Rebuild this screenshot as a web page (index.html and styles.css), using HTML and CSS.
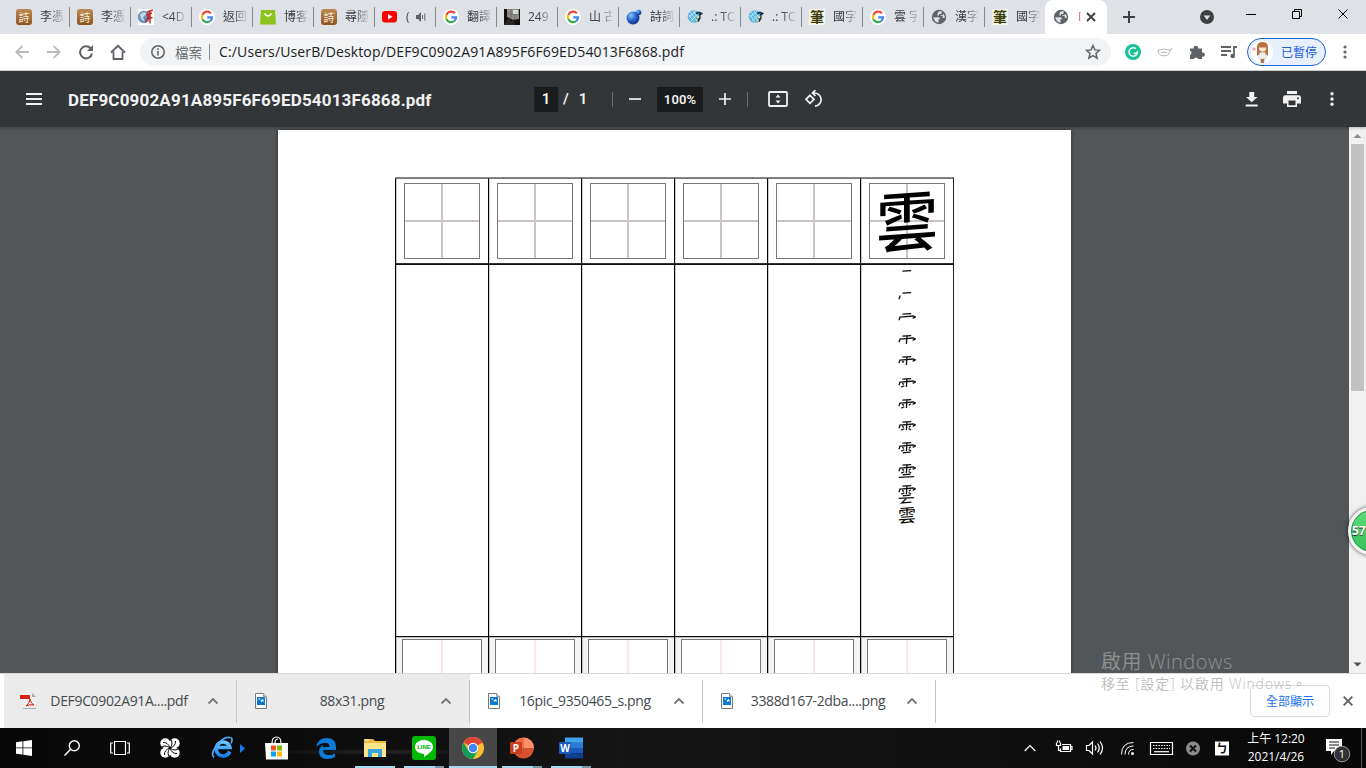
FILE: index.html
```html
<!DOCTYPE html>
<html lang="zh-Hant">
<head>
<meta charset="utf-8">
<title>DEF9C0902A91A895F6F69ED54013F6868.pdf</title>
<link rel="stylesheet" href="styles.css">
</head>
<body>
<svg class="defs" width="0" height="0">
  <defs>
    <linearGradient id="brown" x1="0" y1="0" x2="0" y2="1"><stop offset="0" stop-color="#c08a52"/><stop offset="1" stop-color="#8a5420"/></linearGradient>
    <radialGradient id="ball" cx=".35" cy=".3" r=".8"><stop offset="0" stop-color="#8cc4ff"/><stop offset=".5" stop-color="#2463c8"/><stop offset="1" stop-color="#0a2a7a"/></radialGradient>
    <linearGradient id="ie" x1="0" y1="0" x2="0" y2="1"><stop offset="0" stop-color="#6cc6ff"/><stop offset="1" stop-color="#1482f0"/></linearGradient>
    <symbol id="f-poem" viewBox="0 0 16 16"><rect width="16" height="16" rx="3" fill="url(#brown)"/><text x="8" y="12.500" class="poem" text-anchor="middle">詩</text></symbol>
    <symbol id="f-hua" viewBox="0 0 16 16"><rect width="16" height="16" fill="#fff"/><circle cx="6" cy="8" r="6.200" fill="#5f93bd"/><path d="M2 5l4-2 3 2-4 3 2 5-4-3z" fill="#c5d8e6"/><path d="M9 3l6-2M8 6l6-2M12 1.500v13M7 13q4-4 4-9M8.500 10l6-1.500" stroke="#c22" stroke-width="1.400" fill="none"/></symbol>
    <symbol id="f-google" viewBox="0 0 16 16"><circle cx="8" cy="8" r="8" fill="#fff"/><g fill="none" stroke-width="2.200"><path d="M11.900 4.300A5.100 5.100 0 0 0 3.400 5.800" stroke="#ea4335"/><path d="M3.400 5.800A5.100 5.100 0 0 0 3.400 10.300" stroke="#fbbc05"/><path d="M3.400 10.300A5.100 5.100 0 0 0 11.300 12" stroke="#34a853"/><path d="M11.300 12A5.100 5.100 0 0 0 13.100 8.300H8.200" stroke="#4285f4"/></g></symbol>
    <symbol id="f-bag" viewBox="0 0 16 16"><path d="M1 1h14l1 14.500H0z" fill="#8cc21e"/><path d="M4.500 4.500q3.500 5 7 0" fill="none" stroke="#fff" stroke-width="1.500"/></symbol>
    <symbol id="f-tube" viewBox="0 0 16 16"><rect y="2" width="15" height="11.500" rx="3" fill="#f00"/><path d="M6 5l4.500 2.800L6 10.500z" fill="#fff"/></symbol>
    <symbol id="f-photo" viewBox="0 0 16 16"><rect width="16" height="16" fill="#120f0d"/><path d="M3 0h12v10l-6 1-6-3z" fill="#8c8c88"/><path d="M7 0v10M11 0v10M3 5h12" stroke="#6d6a64" stroke-width=".8"/><path d="M9 1h5v4H9z" fill="#d5d5d2"/><path d="M0 16L5 8l2 4 3-2 1 6z" fill="#2d2621"/></symbol>
    <symbol id="f-ball" viewBox="0 0 16 16"><circle cx="7" cy="9" r="6.500" fill="url(#ball)"/><circle cx="12.500" cy="3.500" r="2.800" fill="url(#ball)"/></symbol>
    <symbol id="f-toc" viewBox="0 0 16 16"><circle cx="7" cy="7.500" r="6.300" fill="#5ab4de"/><path d="M3 3l7 9M2 8l7-6M4 12l6-6M2 6l5 7M6 2l5 7" stroke="#c9efff" stroke-width=".8"/><path d="M9 4.500l3-1 2.500 1-2 1.500.3 3-2 3.500" fill="none" stroke="#172b48" stroke-width="1.700"/><path d="M11.500 6.500v2.500M9 12l1.500-1" stroke="#ffe23a" stroke-width="1.500"/></symbol>
    <symbol id="f-globe" viewBox="0 0 16 16"><circle cx="8" cy="8" r="7.200" fill="#5f6368"/><path d="M2.200 8.200h5q1.800 0 1.800 2H7.500v3.500Q3.500 13.200 2.200 8.200zM8.500 2.300h2.200v1.500q0 1.200-1.300 1.200H8v1.600H6.500V5q0-2 2-2.700zM9.500 7h2.200v2h2.100q.3-2.500-1.500-4.200l-.8 1.500h-2z" fill="#dee1e6"/></symbol>
    <symbol id="chev" viewBox="0 0 12 8"><path d="M1.500 6.500L6 2l4.500 4.500" fill="none" stroke="#757575" stroke-width="1.800"/></symbol>
    <symbol id="png" viewBox="0 0 12 16"><path d="M.5.500h8l3 3v12H.5z" fill="#fff" stroke="#777"/><path d="M8.500.500v3h3" fill="#ddd" stroke="#999"/><rect x="2" y="4" width="8" height="8" fill="#0a78d0"/><path d="M3 5.500h2.500L4.500 7zM5.500 7.500L8 6l1 3-1.500-1-1 1z" fill="#fff"/></symbol>
    <g id="k1"><path d="M14.700 4L44 2"/></g>
    <g id="k2"><use href="#k1"/><path d="M7.300 12L3 24"/></g>
    <g id="k3"><use href="#k2"/><path d="M7.300 14L51 10L58 13L49 18"/></g>
    <g id="k4"><use href="#k3"/><path d="M29.700 3L28 30"/></g>
    <g id="k5"><use href="#k4"/><path d="M13.700 18L20 21.500"/></g>
    <g id="k6"><use href="#k5"/><path d="M10.500 30.700L21 26"/></g>
    <g id="k7"><use href="#k6"/><path d="M43 16L36 21"/></g>
    <g id="k8"><use href="#k7"/><path d="M35 25L44 30"/></g>
    <g id="k9"><use href="#k8"/><path d="M15.700 36L42 34"/></g>
    <g id="k10"><use href="#k9"/><path d="M2 45L54 42"/></g>
    <g id="k11"><use href="#k10"/><path d="M28 45L12 60L45 57"/></g>
  </defs>
</svg>

<header class="tabs">
  <div class="tab"><svg class="fav"><use href="#f-poem"/></svg><span class="tt">李憑</span></div>
  <div class="tab"><svg class="fav"><use href="#f-poem"/></svg><span class="tt">李憑</span></div>
  <div class="tab"><svg class="fav"><use href="#f-hua"/></svg><span class="tt">&lt;4D</span></div>
  <div class="tab"><svg class="fav"><use href="#f-google"/></svg><span class="tt">返回</span></div>
  <div class="tab"><svg class="fav"><use href="#f-bag"/></svg><span class="tt">博客</span></div>
  <div class="tab"><svg class="fav"><use href="#f-poem"/></svg><span class="tt">尋隱</span></div>
  <div class="tab"><svg class="fav"><use href="#f-tube"/></svg><span class="tt tiny">(</span><svg class="snd" viewBox="0 0 10 10"><path d="M0 3h2l3-3v10L2 7H0z" fill="#5f6368"/><path d="M6.500 3v4M8.800 1.500v7" stroke="#5f6368" fill="none"/></svg></div>
  <div class="tab"><svg class="fav"><use href="#f-google"/></svg><span class="tt">翻譯</span></div>
  <div class="tab"><svg class="fav"><use href="#f-photo"/></svg><span class="tt">249</span></div>
  <div class="tab"><svg class="fav"><use href="#f-google"/></svg><span class="tt">山 古</span></div>
  <div class="tab"><svg class="fav"><use href="#f-ball"/></svg><span class="tt">詩詞</span></div>
  <div class="tab"><svg class="fav"><use href="#f-toc"/></svg><span class="tt">.: TO</span></div>
  <div class="tab"><svg class="fav"><use href="#f-toc"/></svg><span class="tt">.: TO</span></div>
  <div class="tab"><span class="fav brush">筆</span><span class="tt">國字</span></div>
  <div class="tab"><svg class="fav"><use href="#f-google"/></svg><span class="tt">雲 字</span></div>
  <div class="tab"><svg class="fav"><use href="#f-globe"/></svg><span class="tt">漢字</span></div>
  <div class="tab last"><span class="fav brush">筆</span><span class="tt">國字</span></div>
  <div class="tab active"><svg class="fav"><use href="#f-globe"/></svg><span class="tt tiny">D</span><svg class="x" viewBox="0 0 10 10"><path d="M1 1l8 8M9 1l-8 8" stroke="#3c4043" stroke-width="1.900"/></svg></div>
  <svg class="plus" viewBox="0 0 12 12"><path d="M6 0v12M0 6h12" stroke="#3c4043" stroke-width="2"/></svg>
  <svg class="drop" viewBox="0 0 14 14"><circle cx="7" cy="7" r="7" fill="#3c4043"/><path d="M3.700 5.500h6.600L7 10z" fill="#dee1e6"/></svg>
  <svg class="win" viewBox="0 0 104 12"><path d="M0 7.500h10M46.500 4.500h7v7h-7zM48.500 4V2.500h7v7H54M92.500 2.500l9 9M101.500 2.500l-9 9" fill="none" stroke="#000"/></svg>
</header>

<nav class="bar">
  <svg class="navs" viewBox="0 0 112 16"><g fill="none" stroke-width="1.800"><path d="M14 8H1.500M7.500 1.800L1.300 8l6.200 6.200M32 8h12.500M38.500 1.800L44.700 8l-6.200 6.200" stroke="#b8babd"/><path d="M75.700 4.500A6 6 0 1 0 77 9.500" stroke="#5f6368" stroke-width="2"/><path d="M96 8.500l7-6.700 7 6.700M98.500 7.500V15h9V7.500" stroke="#5f6368"/></g><path d="M78 1v6h-6z" fill="#5f6368"/></svg>
  <div class="omni">
    <svg class="info" viewBox="0 0 14 14"><circle cx="7" cy="7" r="6.200" fill="none" stroke="#5f6368" stroke-width="1.500"/><path d="M7 6v4.500M7 3.300v1.600" stroke="#5f6368" stroke-width="1.600"/></svg>
    <span class="scheme">檔案</span><i class="vr"></i><span class="url">C:/Users/UserB/Desktop/DEF9C0902A91A895F6F69ED54013F6868.pdf</span>
    <svg class="star" viewBox="0 0 16 16"><path d="M8 1.500l1.900 4.400 4.700.4-3.600 3.100 1.100 4.700L8 11.600l-4.100 2.500L5 9.400 1.400 6.300l4.700-.4z" fill="none" stroke="#5f6368" stroke-width="1.500"/></svg>
  </div>
  <svg class="gram" viewBox="0 0 16 16"><circle cx="8" cy="8" r="8" fill="#15c39a"/><path d="M10.800 4.700a4.200 4.200 0 1 0 1.400 4.500H8.800M12.200 7v3" fill="none" stroke="#fff" stroke-width="1.500"/></svg>
  <svg class="mask" viewBox="0 0 16 10"><path d="M1 3q5.500-2 12 0 0 5-4 5.500-2.500.5-5 0Q1 7 1 3z" fill="#fafafa" stroke="#aaa" stroke-width=".8"/><path d="M4 5l1 .8 1-.8 1 .8 1-.8 1 .8 1-.8M13 3q2 0 2-2" fill="none" stroke="#aaa" stroke-width=".8"/></svg>
  <svg class="puz" viewBox="0 0 16 16"><path d="M1 4.500h3.700a2.200 2.200 0 1 1 4.300 0h4v4a2.200 2.200 0 1 1 0 4.200V15H9.200a2.200 2.200 0 0 0-4.200 0H1v-4a2.200 2.200 0 0 0 0-4.200z" fill="#5f6368"/></svg>
  <svg class="que" viewBox="0 0 16 14"><path d="M0 2h10M0 6h10M0 10h6M13 11V2h3" fill="none" stroke="#5f6368" stroke-width="1.800"/><circle cx="11.700" cy="11" r="2.300" fill="#5f6368"/></svg>
  <div class="prof"><svg class="face" viewBox="0 0 22 22"><circle cx="11" cy="11" r="11" fill="#fff"/><path d="M6 15V6q0-5 5.500-5T17 6v9l-3-2h-5z" fill="#b87145"/><path d="M8 6.500h7V9q-3 3.500-7 0z" fill="#ffe4d0"/><path d="M9 11.500h5l1.500 6h-8z" fill="#eee" stroke="#ccc" stroke-width=".5"/><path d="M9.500 18h4l-.5 4h-3z" fill="#a87955"/><circle cx="3" cy="8" r="1.800" fill="#f7a6be"/></svg><span>已暫停</span></div>
  <svg class="dots" viewBox="0 0 4 14"><g fill="#5f6368"><circle cx="2" cy="2" r="1.600"/><circle cx="2" cy="7" r="1.600"/><circle cx="2" cy="12" r="1.600"/></g></svg>
</nav>

<div class="pdfbar">
  <svg class="menu" viewBox="0 0 16 12"><path d="M0 1h16M0 6h16M0 11h16" stroke="#f1f1f1" stroke-width="2"/></svg>
  <b class="fname">DEF9C0902A91A895F6F69ED54013F6868.pdf</b>
  <div class="pg"><span class="box one">1</span><span class="sl">/</span><span>1</span></div>
  <i class="sep s1"></i>
  <svg class="minus" viewBox="0 0 12 12"><path d="M0 6h12" stroke="#f1f1f1" stroke-width="1.700"/></svg>
  <span class="box pct">100%</span>
  <svg class="add" viewBox="0 0 12 12"><path d="M0 6h12M6 0v12" stroke="#f1f1f1" stroke-width="1.700"/></svg>
  <i class="sep s2"></i>
  <svg class="fit" viewBox="0 0 20 16"><rect x="1" y="1" width="18" height="14" rx="1" fill="none" stroke="#f1f1f1" stroke-width="1.800"/><path d="M7.500 6.500L10 3.500l2.500 3zM7.500 9.500l2.500 3 2.500-3z" fill="#f1f1f1"/></svg>
  <svg class="rot" viewBox="0 0 18 18"><path d="M5 5.300L9 9.300l-4 4-4-4zM10 16.200A6.600 6.600 0 1 0 9 3H7M10.500 0L7.500 3l3 3" fill="none" stroke="#f1f1f1" stroke-width="1.700"/></svg>
  <div class="acts">
    <svg width="14" height="16" viewBox="0 0 14 16"><path d="M4.300 1h4.900v5H12.500L6.700 11.300 1 6h3.300zM.7 13.500h12v2H.7z" fill="#f1f1f1"/></svg>
    <svg width="18" height="16" viewBox="0 0 18 16"><path d="M4 0h10v3H4zM2.500 4.300h13Q18 4.300 18 7v5.500h-4V16H4v-3.500H0V7q0-2.700 2.500-2.700zM5.500 9.500v4.800h7V9.500z" fill="#f1f1f1" fill-rule="evenodd"/><circle cx="15" cy="7.200" r="1" fill="#323639"/></svg>
    <svg width="4" height="16" viewBox="0 0 4 16"><g fill="#f1f1f1"><circle cx="2" cy="2.700" r="1.700"/><circle cx="2" cy="8" r="1.700"/><circle cx="2" cy="13.300" r="1.700"/></g></svg>
  </div>
</div>

<main class="view">
  <div class="paper">
    <div class="grid">
      <div class="c head"><i class="sq"></i></div><div class="c head"><i class="sq"></i></div><div class="c head"><i class="sq"></i></div><div class="c head"><i class="sq"></i></div><div class="c head"><i class="sq"></i></div><div class="c head"><i class="sq"><span class="big">雲</span></i></div>
      <div class="c"></div><div class="c"></div><div class="c"></div><div class="c"></div><div class="c"></div>
      <div class="c steps">
        <svg viewBox="0 0 60 72"><use href="#k1"/></svg><svg viewBox="0 0 60 72"><use href="#k2"/></svg><svg viewBox="0 0 60 72"><use href="#k3"/></svg><svg viewBox="0 0 60 72"><use href="#k4"/></svg><svg viewBox="0 0 60 72"><use href="#k5"/></svg><svg viewBox="0 0 60 72"><use href="#k6"/></svg><svg viewBox="0 0 60 72"><use href="#k7"/></svg><svg viewBox="0 0 60 72"><use href="#k8"/></svg><svg viewBox="0 0 60 72"><use href="#k9"/></svg><svg viewBox="0 0 60 72"><use href="#k10"/></svg><svg viewBox="0 0 60 72"><use href="#k11"/></svg><span class="small">雲</span>
      </div>
      <div class="c foot"><i class="sq"></i></div><div class="c foot"><i class="sq"></i></div><div class="c foot"><i class="sq"></i></div><div class="c foot"><i class="sq"></i></div><div class="c foot"><i class="sq"></i></div><div class="c foot"><i class="sq"></i></div>
    </div>
  </div>
  <div class="scroll"><svg viewBox="0 0 17 17"><path d="M4.500 11L8.500 7l4 4z" fill="#8a8a8a"/></svg><i class="thumb"></i><svg viewBox="0 0 17 17"><path d="M4.500 6.500L8.500 10.500l4-4z" fill="#505050"/></svg></div>
  <div class="badge">57</div>
</main>

<section class="shelf">
  <div class="dl gray"><svg class="di" viewBox="0 0 16 16"><path d="M3 0h9l4 4v12H3z" fill="#eee"/><path d="M12 0v4h4z" fill="#aaa"/><path d="M3 15.500h13" stroke="#aaa"/><path d="M0 2h10v4H0z" fill="#d9230f"/><path d="M6 13q4-3 4-7 1 5 4 6-4-1-8 1z" fill="none" stroke="#d9230f"/></svg><span class="n1">DEF9C0902A91A....pdf</span><svg class="cv"><use href="#chev"/></svg></div>
  <div class="dl gray"><svg class="di"><use href="#png"/></svg><span class="n2">88x31.png</span><svg class="cv"><use href="#chev"/></svg></div>
  <div class="dl"><svg class="di"><use href="#png"/></svg><span class="n3">16pic_9350465_s.png</span><svg class="cv"><use href="#chev"/></svg></div>
  <div class="dl"><svg class="di"><use href="#png"/></svg><span class="n4">3388d167-2dba....png</span><svg class="cv"><use href="#chev"/></svg></div>
  <button class="all">全部顯示</button>
  <svg class="close" viewBox="0 0 10 10"><path d="M.7.700l8.600 8.600M9.300.700L.7 9.300" stroke="#5f6368" stroke-width="1.900"/></svg>
</section>
<div class="mark"><div class="m1">啟用 Windows</div><div class="m2">移至 [設定] 以啟用 Windows。</div></div>

<footer class="task">
  <div class="ti"><svg width="16" height="16" viewBox="0 0 16 16"><path d="M0 2.200L6.500 1.300v6.200H0zM7.300 1.200L16 0v7.500H7.300zM0 8.300h6.500v6.300L0 13.700zM7.300 8.300H16V16l-8.700-1.200z" fill="#fff"/></svg></div>
  <div class="ti"><svg width="16" height="16" viewBox="0 0 16 16"><circle cx="10.300" cy="5.700" r="5" fill="none" stroke="#fff" stroke-width="1.400"/><path d="M6.700 9.300L.5 15.500" stroke="#fff" stroke-width="1.500"/></svg></div>
  <div class="ti"><svg width="20" height="16" viewBox="0 0 20 16"><path d="M4.500 1.500h11v13h-11zM3 3H.7v10H3M17 3h2.300v10H17" fill="none" stroke="#fff" stroke-width="1.200"/></svg></div>
  <div class="ti"><svg width="20" height="20" viewBox="0 0 20 20"><g fill="#fff"><circle cx="5.300" cy="5.300" r="5"/><circle cx="14.700" cy="5.300" r="5"/><circle cx="14.700" cy="14.700" r="5"/><circle cx="5.300" cy="14.700" r="5"/><path d="M6 6h8v8H6z"/></g><path d="M10 10Q8 4 3 4.500M10 10q6-2 5.500-7M10 10q2 6 7 5.500M10 10q-6 2-5.500 7M10 10Q14 5 10 0M10 10q5 4 10 0M10 10q-4 5 0 10M10 10Q5 6 0 10" fill="none" stroke="#080808" stroke-width="1"/></svg></div>
  <div class="ti ieb"><svg width="34" height="24" viewBox="0 0 34 24"><path d="M18.700 15.500A7 7 0 1 1 19 11.500H7" fill="none" stroke="url(#ie)" stroke-width="3.600"/><path d="M3 21.500Q-1 18 6 9T19 1.500q3.500.5 1 6" fill="none" stroke="#49aaf7" stroke-width="1.700"/><path d="M29 8l5 4.500-5 4.500z" fill="#1877f2"/></svg></div>
  <div class="ti"><svg width="24" height="24" viewBox="0 0 24 24"><path d="M0 7h23v16.500H1z" fill="#fff"/><path d="M7 7q0-6 4.500-6T16 7M10 7q0-4 3-4" fill="none" stroke="#fff" stroke-width="1.200"/><path d="M6 9.500h5v5H6z" fill="#f25022"/><path d="M12 9.500h5v5h-5z" fill="#7fba00"/><path d="M6 15.500h5v5H6z" fill="#00a4ef"/><path d="M12 15.500h5v5h-5z" fill="#ffb900"/></svg></div>
  <div class="ti"><svg width="20" height="21" viewBox="0 0 20 21"><path d="M0 9Q2 0 10.500 0 20 0 20 9v3H7q0 5 6 5 3 0 6-1.500V19q-3 2-8 2-8 0-8-8 0-4 5-6.500Q6 8 6.500 9h7q0-4-4-4Q4 5 0 9z" fill="#0a7bd8"/></svg></div>
  <div class="ti on"><svg width="22" height="20" viewBox="0 0 22 20"><path d="M0 1h9l2 2h11v16H0z" fill="#e9b83c"/><path d="M0 5h22v14H0z" fill="#ffe28a"/><path d="M1 2h4" stroke="#fff"/><path d="M4 19v-8h14v8h-4v-4H8v4z" fill="#35a5e0"/></svg></div>
  <div class="ti on dbl"><svg width="24" height="24" viewBox="0 0 24 24"><rect width="24" height="24" rx="3" fill="#00b900"/><path d="M12 4c5 0 9 3 9 7 0 3-3 6-9 10v-3.200c-5 0-9-2.800-9-6.800s4-7 9-7z" fill="#fff"/><text x="12" y="13.200" class="ln" text-anchor="middle">LINE</text></svg></div>
  <div class="ti on hot"><svg width="22" height="22" viewBox="0 0 22 22"><circle cx="11" cy="11" r="11" fill="#fbc02d"/><path d="M11 11L1.500 5.500A11 11 0 0 1 20.500 5.500z" fill="#db4437"/><path d="M1.500 5.500A11 11 0 0 0 11 22l4.700-8.300L11 11 6 13z" fill="#0f9d58"/><path d="M11 6h9.800L20 4H10z" fill="#db4437"/><circle cx="11" cy="11" r="5.200" fill="#fff"/><circle cx="11" cy="11" r="4.200" fill="#4285f4"/></svg></div>
  <div class="ti on dbl"><svg width="24" height="22" viewBox="0 0 24 22"><circle cx="13.500" cy="11" r="10.500" fill="#d35230"/><path d="M13.500.500v10.500h10.500A10.500 10.500 0 0 0 13.500.500z" fill="#ff8f6b"/><path d="M13.500.500A10.500 10.500 0 0 0 3 11h10.500z" fill="#ed6c47"/><rect y="5" width="12" height="12" rx="1" fill="#c43e1c"/><text x="6" y="14.500" class="of" text-anchor="middle">P</text></svg></div>
  <div class="ti on dbl"><svg width="24" height="22" viewBox="0 0 24 22"><path d="M6 .500h18v5.300H6z" fill="#41a5ee"/><path d="M6 5.800h18V11H6z" fill="#2b7cd3"/><path d="M6 11h18v5.300H6z" fill="#185abd"/><path d="M6 16.300h18v5.200H6z" fill="#103f91"/><rect y="5" width="12" height="12" rx="1" fill="#185abd"/><text x="6" y="14.500" class="of" text-anchor="middle">W</text></svg></div>
  <svg class="tray" viewBox="0 0 210 22"><g fill="none" stroke="#fff" stroke-width="1.200"><path d="M.7 14l5.300-5.500L11.300 14"/><path d="M38 7.500h8.500v7H36.500v-3M46.500 9.500h1.500v3h-1.500M32.500 5.500v3h4v-3M33.500 5.500V3.500M35.500 5.500V3.500M34.500 8.500v5h2"/><path d="M62.500 8.500h2.500l3.500-3.500v12l-3.500-3.500h-2.500zM71 8.500q2 2.500 0 5M73.500 6.500q3.500 4.500 0 9M76 4.500q5 6.500 0 13"/><path d="M97.500 17.500q0-12 12-12M101 17.500q0-8.500 8.500-8.500M104.500 17.500q0-5 5-5" stroke-width="1"/><path d="M126.500 5.500h22v12h-22z"/><path d="M129 8.500h17M129 11.500h17" stroke-dasharray="1.500 1.200"/><path d="M130 14.700h15"/></g><path d="M38.500 9h6.500v4h-6.500z" fill="#fff"/><circle cx="108.500" cy="16.500" r="1.500" fill="#fff"/><circle cx="169" cy="11.500" r="7" fill="#8b8b8b"/><path d="M166 8.500l6 6M172 8.500l-6 6" stroke="#111" stroke-width="2"/><path d="M191 4.500h14v14h-14z" fill="#fff"/><text x="198" y="16" class="ime" text-anchor="middle">ㄅ</text></svg>
  <div class="clock"><span>上午 12:20</span><span class="date">2021/4/26</span></div>
  <svg class="note" viewBox="0 0 26 26"><path d="M0 1h16v12H8l-3 4v-4H0z" fill="#fff"/><path d="M3 4h10M3 7h10M3 10h6" stroke="#111"/><circle cx="16" cy="16" r="7.800" fill="#333" stroke="#999"/><text x="16" y="20" class="nn" text-anchor="middle">1</text></svg>
  <i class="edge"></i>
</footer>
</body>
</html>
```
FILE: styles.css
```css
* { box-sizing: border-box; }
body { margin: 0; width: 1366px; height: 768px; overflow: hidden; position: relative; display: flex; flex-direction: column; font-family: "Open Sans", "Noto Sans CJK TC", sans-serif; font-size: 14px; background: #525659; }
svg { flex: none; display: block; }
.defs { position: absolute; }

.tabs { height: 34px; flex: none; background: #dee1e6; display: flex; padding-left: 9px; }
.tab { width: 61px; flex: none; height: 34px; display: flex; align-items: center; padding-left: 7px; position: relative; }
.tab::after { content: ""; position: absolute; right: 0; top: 7px; width: 1px; height: 20px; background: #85888d; }
.last::after, .active::after { display: none; }
.fav { width: 16px; height: 16px; flex: none; }
.poem { font: 400 11px "Noto Sans CJK TC", sans-serif; fill: #f7ead8; }
.tt { margin-left: 8px; width: 23px; overflow: hidden; white-space: nowrap; font-size: 12px; line-height: 18px; color: #3c4043; font-weight: 400; -webkit-mask-image: linear-gradient(90deg, #000 45%, transparent 110%); mask-image: linear-gradient(90deg, #000 45%, transparent 110%); }
.tiny { width: 4px; }
.brush { background: #f6f5e6; color: #3b3c0c; font-size: 14px; font-weight: 700; line-height: 15px; text-align: center; }
.snd { width: 10px; height: 10px; margin-left: 6px; }
.active { background: #fff; border-radius: 8px 8px 0 0; width: 62px; margin-left: -1px; padding-left: 8px; }
.active .tt { color: #b96b55; margin-left: 9px; width: 3px; }
.x { width: 10px; height: 10px; margin-left: 5px; }
.plus { width: 12px; height: 12px; margin: 11px 0 0 16px; }
.drop { width: 14px; height: 14px; margin: 10px 0 0 65px; }
.win { width: 104px; height: 12px; margin: 7px 0 0 32px; }

.bar { height: 37px; flex: none; background: #fff; border-bottom: 1px solid #d5d7da; display: flex; align-items: center; padding-left: 15px; }
.navs { width: 112px; height: 16px; }
.omni { margin-left: 13px; width: 971px; height: 28px; border-radius: 14px; background: #f1f3f4; display: flex; align-items: center; padding-left: 11px; flex: none; }
.info { width: 14px; height: 14px; }
.scheme { margin-left: 10px; font-size: 13.500px; font-weight: 350; color: #5f6368; width: 28px; white-space: nowrap; }
.vr { width: 1px; height: 16px; background: #8a8d91; margin-left: 6px; }
.url { margin-left: 9px; width: 866px; color: #202124; white-space: nowrap; letter-spacing: .14px; margin-top: -1px; }
.star { width: 16px; height: 16px; }
.gram { width: 16px; height: 16px; margin-left: 14px; }
.mask { width: 16px; height: 10px; margin-left: 16px; }
.puz { width: 16px; height: 16px; margin-left: 16px; }
.que { width: 16px; height: 14px; margin-left: 16px; }
.prof { width: 79px; height: 28px; flex: none; margin-left: 10px; border: 1.500px solid #1a64d0; border-radius: 14px; background: #e8f0fe; display: flex; align-items: center; padding-left: 3px; font-size: 12px; color: #1a62d6; white-space: nowrap; }
.prof span { margin-left: 8px; }
.face { width: 22px; height: 22px; }
.dots { width: 4px; height: 14px; margin-left: 17px; }

.pdfbar { height: 56px; flex: none; background: #323639; color: #f1f1f1; font-family: Roboto, sans-serif; display: flex; align-items: center; padding-left: 26px; position: relative; z-index: 2; box-shadow: 0 1px 3px rgba(0,0,0,.25); }
.menu { width: 16px; height: 12px; }
.fname { margin-left: 26px; width: 440px; font-size: 17px; letter-spacing: .17px; font-weight: 700; white-space: nowrap; padding-top: 1px; }
.pg { display: flex; align-items: center; margin-left: 26px; width: 78px; font-size: 15px; font-weight: 600; }
.box { background: #191b1c; height: 25px; line-height: 25px; text-align: center; }
.one { width: 24px; }
.sl { margin: 0 10px 0 5px; }
.sep { width: 1px; height: 15px; background: #6b6e70; }
.minus { width: 12px; height: 12px; margin-left: 16px; }
.pct { width: 46px; margin-left: 16px; font-size: 13px; font-weight: 600; letter-spacing: .1px; }
.add { width: 12px; height: 12px; margin-left: 16px; }
.s2 { margin-left: 16px; }
.fit { width: 20px; height: 16px; margin-left: 20px; }
.rot { width: 18px; height: 18px; margin-left: 17px; }
.acts { margin-left: auto; display: flex; align-items: center; gap: 24px; padding-right: 32px; }
.acts svg:nth-child(3) { margin-left: 5px; }

.view { height: 546px; flex: none; position: relative; overflow: hidden; display: flex; justify-content: space-between; padding: 3px 0 0 278px; }
.paper { width: 793px; height: 800px; background: #fff; padding: 47px 0 0 117px; box-shadow: 0 0 4px rgba(0,0,0,.45); }
.grid { display: grid; grid-template-columns: repeat(6, 93px); grid-template-rows: 86px 372px 86px; width: 559px; border-right: 1px solid #222; border-top: 1px solid #888; }
.c { border-left: 1px solid #000; border-top: 1px solid #111; box-shadow: inset 1px 0 #ccc; }
.head { padding: 4px 0 0 8px; border-top-color: #777; border-bottom: 1px solid #333; }
.sq { display: block; position: relative; width: 76px; height: 76px; border: 1px solid #777; background: linear-gradient(#cbc3c3, #cbc3c3) 36px 0/2px 100% no-repeat, linear-gradient(#cbc3c3, #cbc3c3) 0 36px/100% 2px no-repeat, #fff; }
.foot { background: #f4f4f4; padding: 2px 0 0 6px; box-shadow: inset 1px 1px #bbb; }
.foot .sq { width: 80px; height: 80px; background: linear-gradient(#ffe5e5, #ffe5e5) 38px 0/2px 100% no-repeat, #fff; }
.big { position: absolute; left: 6px; top: 2px; width: 62px; height: 64px; font: normal 500 62px/64px "Noto Sans CJK TC", sans-serif; color: #000; transform: skewY(-4deg) scaleY(1.05); }
.steps { display: flex; flex-direction: column; align-items: flex-start; padding: 5px 0 0 37px; }
.steps svg { width: 18px; height: 21.500px; fill: none; stroke: #111; stroke-width: 4.300; }
.small { font: 400 18px/20px "Noto Sans CJK TC", sans-serif; color: #000; margin-top: -3px; transform: skewY(-4deg); }
.scroll { width: 17px; background: #f1f1f1; margin-top: -3px; display: flex; flex-direction: column; align-items: center; }
.scroll svg { width: 17px; height: 17px; }
.thumb { width: 13px; height: 247px; background: #c1c1c1; margin-bottom: auto; }
.badge { position: absolute; left: 1348px; top: 380px; width: 48px; height: 48px; border-radius: 50%; border: 3px solid #f4f4f4; background: linear-gradient(#5fdc7c, #35c05a); box-shadow: 0 0 4px rgba(0,0,0,.7), inset 0 0 0 1px #179448; color: #fff; font: 700 12px/41px "Open Sans", sans-serif; padding-left: 1px; text-shadow: 0 1px 1px #222; }

.shelf { height: 55px; flex: none; background: #fff; border-top: 1px solid #d9d9d9; display: flex; align-items: center; padding-left: 4px; position: relative; }
.dl { width: 233px; height: 54px; display: flex; align-items: center; padding: 0 18px 0 16px; position: relative; color: #454a4f; flex: none; white-space: nowrap; }
.dl::after { content: ""; position: absolute; right: 0; top: 6px; height: 43px; width: 1px; background: #c4c4c4; }
.gray { background: #ebebeb; }
.di { width: 16px; height: 16px; }
.dl span { width: 138px; margin-left: 14px; text-align: center; letter-spacing: -.35px; margin-top: -1px; }
.cv { width: 12px; height: 8px; margin-left: auto; }
.all { margin-left: 314px; width: 80px; height: 32px; flex: none; background: #fff; border: 1px solid #dadce0; border-radius: 4px; color: #1a73e8; font: 12px "Noto Sans CJK TC", sans-serif; padding: 0; margin-top: -1px; }
.close { width: 10px; height: 10px; margin-left: 13px; }
.mark { position: absolute; left: 1101px; top: 648px; font-weight: 350; white-space: nowrap; color: rgba(165,165,165,.75); }
.m1 { font-size: 20px; line-height: 28px; letter-spacing: .5px; }
.m2 { font-size: 14px; line-height: 18px; margin-top: -1px; letter-spacing: .85px; width: 215px; }

.task { height: 40px; flex: none; background: radial-gradient(ellipse at 28% 60%, #252525, transparent 9%), linear-gradient(90deg, #080808, #0b0b0b 20%, #141414 45%, #101010 70%, #080808); display: flex; align-items: center; color: #fff; }
.ti { width: 49px; height: 40px; display: flex; align-items: center; justify-content: center; flex: none; position: relative; }
.ti:first-child { width: 48px; }
.ti:nth-child(2), .ti:nth-child(3) { width: 48px; }
.ti:nth-child(4) { width: 52px; }
.ieb { width: 62px; padding-left: 2px; }
.ti:nth-child(6) { width: 38px; }
.ti:nth-child(7) { width: 59px; }
.ti:nth-child(8) { width: 40px; margin-right: 9px; }
.ti:nth-child(9) { width: 40px; margin-right: 5px; }
.ti:nth-child(10) { width: 48px; margin-right: 5px; }
.ti:nth-child(11) { width: 40px; margin-right: 9px; }
.ti:nth-child(12) { width: 40px; }
.on::after { content: ""; position: absolute; left: 0; right: 0; bottom: 0; height: 2px; background: #a6d8f0; }
.dbl::after { background: linear-gradient(90deg, #a6d8f0 31px, #7896a6 31px); }
.hot { background: #474747; }
.ln { font: 700 6px "Liberation Sans", sans-serif; fill: #00b900; }
.of { font: 700 10px "Open Sans", sans-serif; fill: #fff; }
.nn { font: 11px "Open Sans", sans-serif; fill: #fff; }
.ime { font: 700 12px "Noto Sans CJK TC", sans-serif; fill: #111; }
.tray { width: 210px; height: 22px; margin-left: auto; }
.clock { margin-left: 4px; width: 76px; display: flex; flex-direction: column; align-items: center; font-size: 12px; line-height: 18px; letter-spacing: -.05px; white-space: nowrap; }
.note { width: 26px; height: 26px; margin: 6px 9px 0 12px; }
.edge { width: 1px; height: 40px; background: #555; margin-right: 4px; }
```
